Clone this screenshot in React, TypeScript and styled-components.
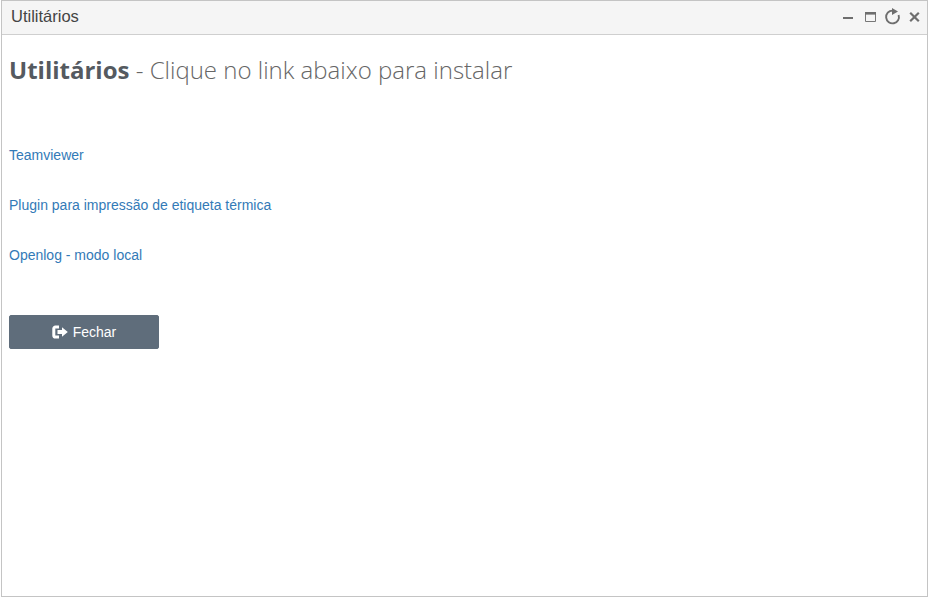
import React from "react";
import styled, { createGlobalStyle } from "styled-components";

const Global = createGlobalStyle`
  html, body { margin: 0; padding: 0; background: #fff; }
  body { font-family: "Liberation Sans", Arial, sans-serif; }
`;

const Page = styled.div`
  width: 929px;
  height: 600px;
  padding-left: 1px;
  box-sizing: border-box;
`;

const Win = styled.div`
  width: 927px;
  height: 597px;
  box-sizing: border-box;
  border: 1px solid #c4c4c4;
  display: flex;
  flex-direction: column;
`;

const TitleBar = styled.div`
  height: 34px;
  flex: none;
  box-sizing: border-box;
  background: #f5f5f5;
  border-bottom: 1px solid #cfcfcf;
  display: flex;
  align-items: center;
  justify-content: space-between;
  padding: 0 7px 2px 9px;
`;

const WinTitle = styled.span`
  font-size: 16.5px;
  color: #444;
`;

const Controls = styled.div`
  display: flex;
  align-items: center;
  gap: 8px;
`;

const IconSvg = styled.svg`
  display: block;
`;

const Content = styled.div`
  flex: 1;
  padding: 20px 7px 0;
`;

const Heading = styled.h1`
  margin: 0;
  font-family: "Open Sans", sans-serif;
  font-size: 24px;
  line-height: 30px;
  font-weight: 300;
  color: #666;
`;

const Strong = styled.strong`
  font-weight: 700;
  color: #555a60;
`;

const Links = styled.div`
  margin-top: 60px;
  display: flex;
  flex-direction: column;
  gap: 30px;
`;

const LinkItem = styled.a`
  font-size: 14px;
  line-height: 20px;
  color: #337ab7;
  text-decoration: none;
`;

const CloseButton = styled.button`
  margin-top: 50px;
  width: 150px;
  height: 34px;
  border: 1px solid #5f6d7b;
  border-radius: 2px;
  background: #5f6d7b;
  color: #fff;
  font-family: "Liberation Sans", Arial, sans-serif;
  font-size: 14px;
  display: flex;
  align-items: center;
  justify-content: center;
  gap: 5px;
  padding: 0;
`;

export default function App() {
  return (
    <Page>
      <Global />
      <Win>
        <TitleBar>
          <WinTitle>Utilitários</WinTitle>
          <Controls>
            <IconSvg width="15" height="12" viewBox="0 0 15 12">
              <rect x="1" y="6" width="10" height="2" fill="#6e6e6e" />
            </IconSvg>
            <IconSvg width="11" height="12" viewBox="0 0 11 12">
              <path d="M0.5 1.5h10v9h-10z" fill="none" stroke="#777" />
              <rect x="0" y="1" width="11" height="2.6" fill="#6e6e6e" />
            </IconSvg>
            <IconSvg width="17" height="17" viewBox="0 0 17 17">
              <path d="M8.5 2.6A6.4 6.4 0 1 0 14.6 7" fill="none" stroke="#6e6e6e" strokeWidth="1.9" />
              <path d="M8 0l6 3.4-6 3.6z" fill="#6e6e6e" />
            </IconSvg>
            <IconSvg width="11" height="12" viewBox="0 0 11 12">
              <path d="M1.2 1.7l8.6 8.6M9.8 1.7l-8.6 8.6" fill="none" stroke="#6e6e6e" strokeWidth="2.2" />
            </IconSvg>
          </Controls>
        </TitleBar>
        <Content>
          <Heading>
            <Strong>Utilitários</Strong> - Clique no link abaixo para instalar
          </Heading>
          <Links>
            <LinkItem href="#">Teamviewer</LinkItem>
            <LinkItem href="#">Plugin para impressão de etiqueta térmica</LinkItem>
            <LinkItem href="#">Openlog - modo local</LinkItem>
          </Links>
          <CloseButton type="button">
            <IconSvg width="16" height="14" viewBox="0 0 16 14">
              <path d="M7 2H3.4A1.6 1.6 0 0 0 1.8 3.6v6.8A1.6 1.6 0 0 0 3.4 12H7" fill="none" stroke="#fff" strokeWidth="3" />
              <path d="M5.5 5H10V2.2L15.8 7 10 11.8V9H5.5z" fill="#fff" />
            </IconSvg>
            Fechar
          </CloseButton>
        </Content>
      </Win>
    </Page>
  );
}
